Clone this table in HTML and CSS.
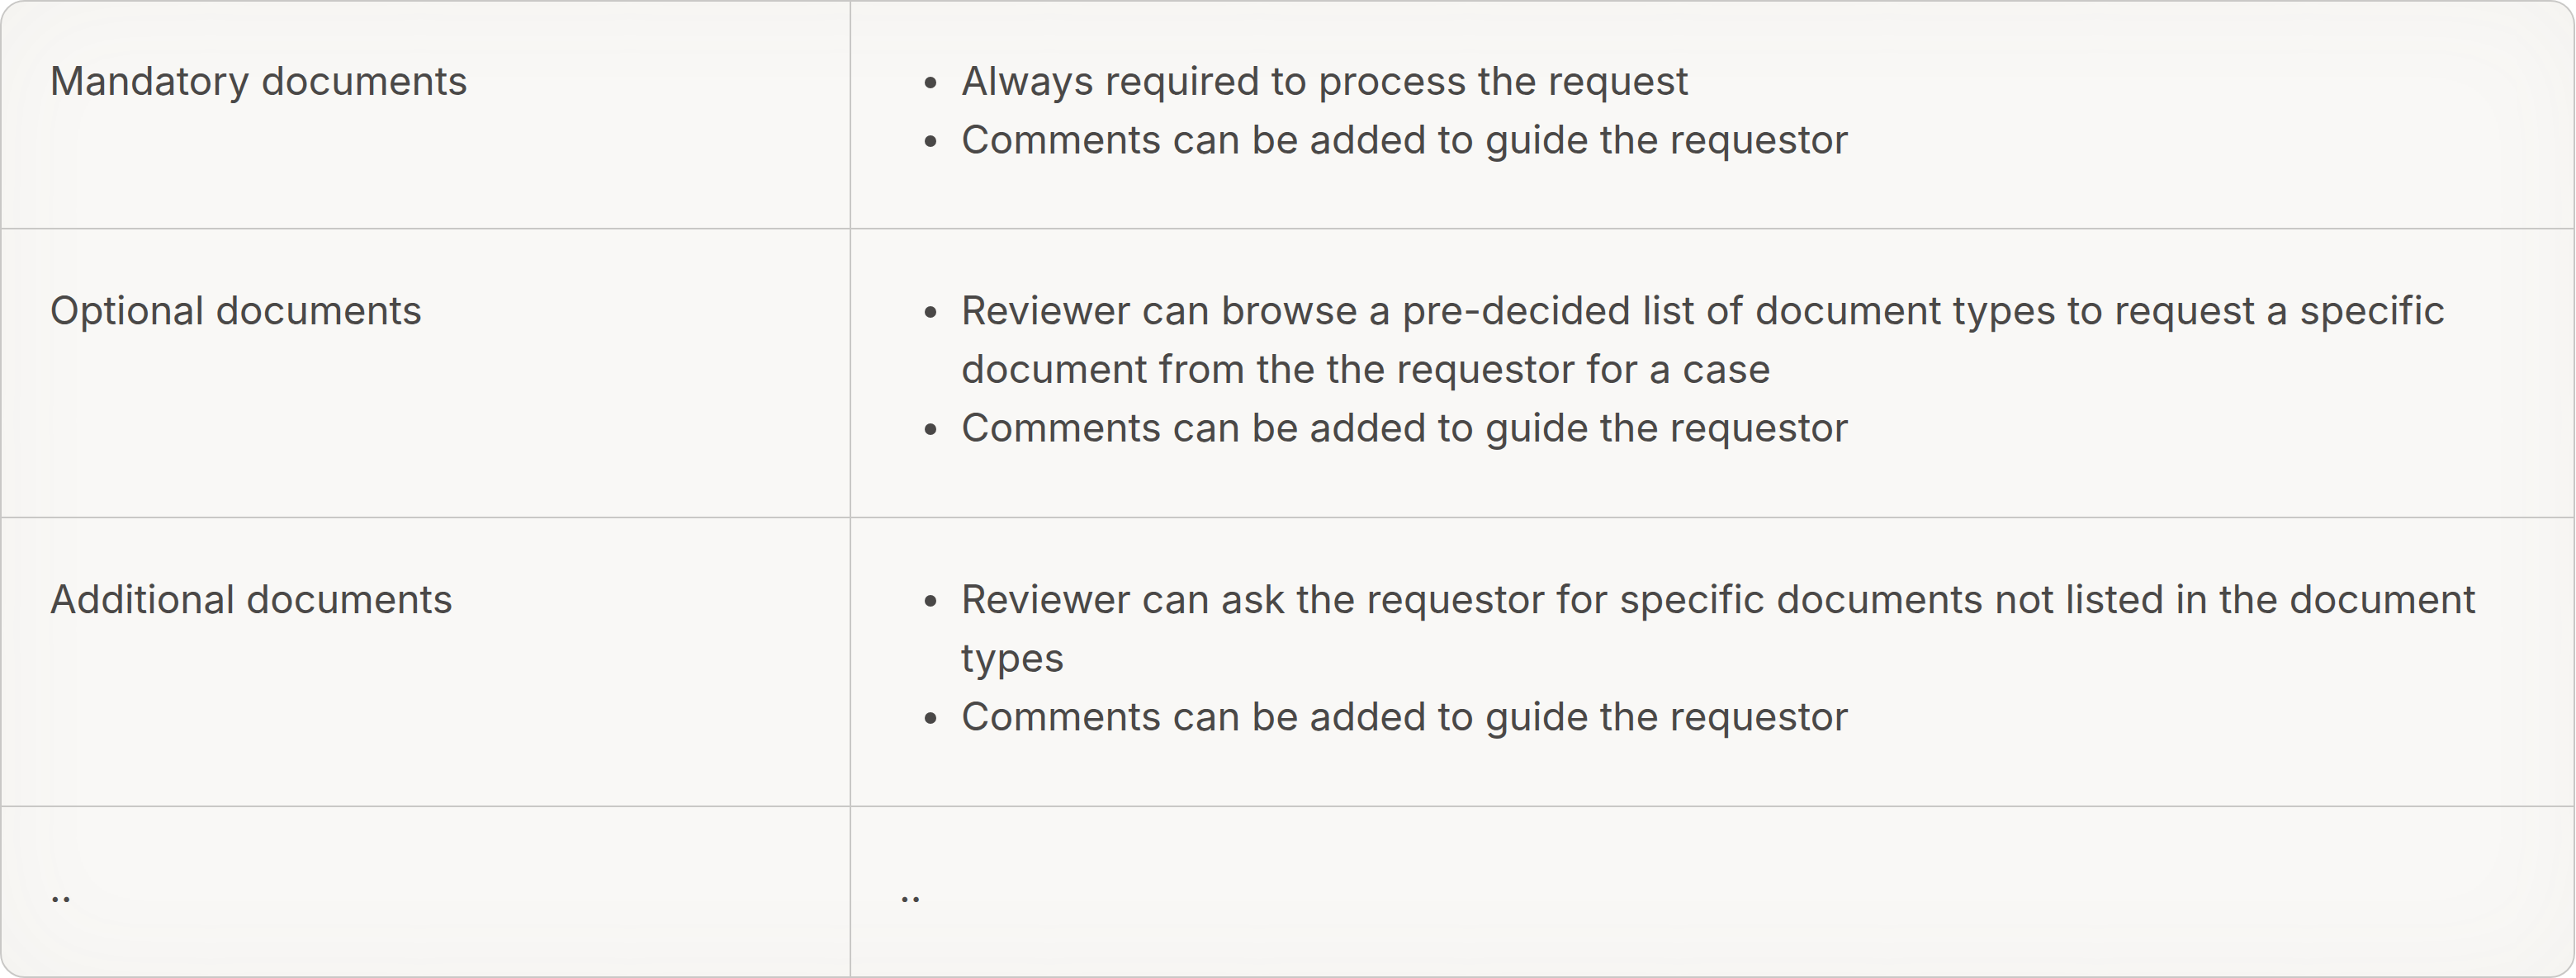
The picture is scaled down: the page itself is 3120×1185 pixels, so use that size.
FILE: index.html
```html
<!DOCTYPE html>
<html lang="en">
<head>
<meta charset="utf-8">
<title>Document types</title>
<link rel="stylesheet" href="styles.css">
</head>
<body>
<div class="table-card">
  <table class="doc-table">
    <colgroup>
      <col class="col-type">
      <col class="col-desc">
    </colgroup>
    <tbody>
      <tr>
        <td class="cell cell-type">Mandatory documents</td>
        <td class="cell cell-desc">
          <ul class="bullets">
            <li>Always required to process the request</li>
            <li>Comments can be added to guide the requestor</li>
          </ul>
        </td>
      </tr>
      <tr>
        <td class="cell cell-type">Optional documents</td>
        <td class="cell cell-desc">
          <ul class="bullets">
            <li>Reviewer can browse a pre-decided list of document types to request a specific document from the the requestor for a case</li>
            <li>Comments can be added to guide the requestor</li>
          </ul>
        </td>
      </tr>
      <tr>
        <td class="cell cell-type">Additional documents</td>
        <td class="cell cell-desc">
          <ul class="bullets">
            <li>Reviewer can ask the requestor for specific documents not listed in the document types</li>
            <li>Comments can be added to guide the requestor</li>
          </ul>
        </td>
      </tr>
      <tr>
        <td class="cell cell-type">..</td>
        <td class="cell cell-desc">..</td>
      </tr>
    </tbody>
  </table>
</div>
</body>
</html>
```
FILE: styles.css
```css
html, body {
  margin: 0;
  padding: 0;
  background: #ffffff;
}

body {
  font-family: Inter, "Noto Sans", "Liberation Sans", sans-serif;
  color: #4a4847;
}

.table-card {
  box-sizing: border-box;
  width: 3119px;
  border: 2px solid #c9c8c6;
  border-radius: 30px;
  overflow: hidden;
  background: #f9f8f6;
  box-shadow: inset 0 0 140px rgba(120, 110, 100, 0.045);
}

.doc-table {
  width: 100%;
  border-collapse: collapse;
  table-layout: fixed;
}

.col-type {
  width: 1028px;
}

.cell {
  vertical-align: top;
  font-size: 47.6px;
  line-height: 71px;
  padding: 62px 58px 73px 58px;
  border-bottom: 2px solid #c9c8c6;
}

tr:first-child .cell {
  padding-top: 60px;
  padding-bottom: 72px;
}

tr:last-child .cell {
  border-bottom: none;
  padding-bottom: 72px;
}

.cell-type {
  border-right: 2px solid #c9c8c6;
}

.bullets {
  list-style: none;
  margin: 0;
  padding: 0 0 0 75px;
}

.bullets li {
  position: relative;
}

.bullets li::before {
  content: "";
  position: absolute;
  left: -44px;
  top: 31px;
  width: 14px;
  height: 14px;
  border-radius: 50%;
  background: #4a4847;
}
```
